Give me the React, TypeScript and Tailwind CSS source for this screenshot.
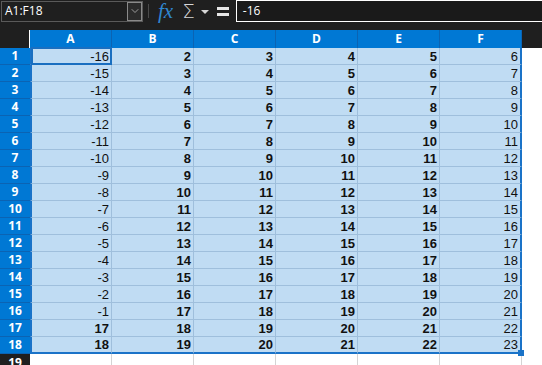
import { ChevronDown } from "lucide-react";

const cols = ["A", "B", "C", "D", "E", "F"];
const rows = Array.from({ length: 18 }, (_, i) => i + 1);

function valueAt(row: number, col: number) {
    if (col === 0) return row <= 16 ? row - 17 : row;
    return row + col;
}

export default function App() {
    return (
        <div className="h-[365px] w-[542px] overflow-hidden bg-[#1f1f1f] font-['Liberation_Sans',Arial,sans-serif]">
            {/* Formula bar */}
            <div className="flex h-[22px] items-center">
                <div className="ml-px flex h-[21px] w-[142px] border border-[#5a5a5a]">
                    <div className="flex flex-1 items-center pl-[3px] font-['Open_Sans',sans-serif] text-[12px] text-white">
                        A1:F18
                    </div>
                    <div className="flex w-[15px] items-center justify-center border border-[#8a8a8a] bg-[#2b2b2b]">
                        <ChevronDown className="h-3 w-3 text-[#bdbdbd]" strokeWidth={1.5} />
                    </div>
                </div>
                <div className="ml-[5px] h-[14px] w-px bg-[#4a4a4a]" />
                <span className="ml-[9px] font-['Liberation_Serif',serif] text-[21px] italic leading-[22px] text-[#2f86cf]">
                    fx
                </span>
                <span className="ml-[9px] font-['DejaVu_Sans',sans-serif] text-[20px] font-light leading-[22px] text-[#d6d6d6]">
                    Σ
                </span>
                <span className="ml-[6px] mt-[2px] h-0 w-0 border-x-[4px] border-t-[4px] border-x-transparent border-t-[#d6d6d6]" />
                <span className="ml-[8px] flex flex-col gap-[3px]">
                    <span className="h-[3px] w-[12px] bg-[#e6e6e6]" />
                    <span className="h-[3px] w-[12px] bg-[#e6e6e6]" />
                </span>
                <div className="ml-[7px] flex h-[22px] flex-1 items-center border border-white border-r-0 bg-[#1a1a1a] pl-[6px] font-['Open_Sans',sans-serif] text-[12px] text-white">
                    -16
                </div>
            </div>

            <div className="h-[8px]" />

            {/* Sheet */}
            <div className="grid grid-cols-[30px_repeat(6,82px)_1fr] text-[13px]">
                {/* Column headers */}
                <div className="h-[18px] border-r border-white bg-[#1f1f1f]" />
                {cols.map((c) => (
                    <div
                        key={c}
                        className="flex h-[18px] items-center justify-center border-r border-[#0b63b3] bg-[#0078d4] font-['Open_Sans',sans-serif] text-[12px] font-bold text-white"
                    >
                        {c}
                    </div>
                ))}
                <div className="h-[18px] bg-[#1f1f1f]" />

                {rows.map((r) => (
                    <Row key={r} row={r} />
                ))}

                {/* Row 19 */}
                <div className="flex h-[17px] items-center justify-center bg-[#1f1f1f] font-['Open_Sans',sans-serif] text-[12px] font-bold text-white">
                    19
                </div>
                {cols.map((c) => (
                    <div key={c} className="h-[17px] border-r border-[#d4d4d4] bg-white" />
                ))}
                <div className="h-[17px] bg-white" />
            </div>
        </div>
    );
}

function Row({ row }: { row: number }) {
    const last = row === 18;
    return (
        <>
            <div className="flex h-[17px] items-center justify-center border-b border-[#0b63b3] bg-[#0078d4] font-['Open_Sans',sans-serif] text-[12px] font-bold text-white">
                {row}
            </div>
            {cols.map((c, i) => {
                const v = valueAt(row, i);
                const bold = (i >= 1 && i <= 4) || (i === 0 && v > 0);
                const active = row === 1 && i === 0;
                return (
                    <div
                        key={c}
                        className={
                            "relative flex h-[17px] items-center justify-end bg-[#c0dcf3] pr-[2px] leading-none text-[#111] " +
                            (last ? "border-b-2 border-b-[#1a73c8] " : "border-b border-b-[#9fbfdc] ") +
                            (i === 5 ? "border-r-2 border-r-[#1a73c8] " : "border-r border-r-[#9fbfdc] ") +
                            (i === 0 ? "border-l-2 border-l-[#1a73c8] " : "") +
                            (bold ? "font-bold" : "")
                        }
                    >
                        {active && (
                            <span className="pointer-events-none absolute inset-[-1px] border-2 border-[#1a6fc0]" />
                        )}
                        <span className="relative">{v}</span>
                        {last && i === 5 && (
                            <span className="absolute -bottom-[4px] -right-[4px] h-[6px] w-[6px] bg-[#1a73c8]" />
                        )}
                    </div>
                );
            })}
            <div className="h-[17px] bg-white" />
        </>
    );
}
